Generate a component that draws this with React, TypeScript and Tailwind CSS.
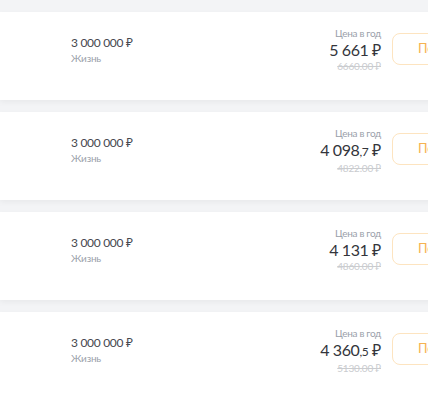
const offers = [
  { whole: '5 661', fraction: '', old: '6660.00 ₽' },
  { whole: '4 098', fraction: ',7', old: '4822.00 ₽' },
  { whole: '4 131', fraction: '', old: '4860.00 ₽' },
  { whole: '4 360', fraction: ',5', old: '5130.00 ₽' },
];

function OfferCard({ whole, fraction, old }: { whole: string; fraction: string; old: string }) {
  return (
    <div className="flex h-[88px] w-[530px] shrink-0 items-start bg-white shadow-[0_2px_6px_rgba(0,0,0,0.05)]">
      <div className="w-[71px] shrink-0" />
      <div className="flex-1 pt-[23px]">
        <div className="text-[12px] leading-4 tracking-[-0.3px] text-[#46484f]">3 000 000 ₽</div>
        <div className="text-[10px] leading-[14px] tracking-[-0.2px] text-[#9aa0aa]">Жизнь</div>
      </div>
      <div className="flex flex-col items-end pt-[14px]">
        <div className="text-[10px] leading-[14px] tracking-[-0.3px] text-[#9aa0aa]">Цена в год</div>
        <div className="text-[16px] leading-5 tracking-[-0.4px] text-[#33353b]">
          {whole}
          {fraction && <span className="text-[12px]">{fraction}</span>} ₽
        </div>
        <div className="text-[10px] leading-3 tracking-[-0.2px] text-[#cacccf] line-through">{old}</div>
      </div>
      <div className="ml-[11px] mt-[21px] flex h-8 w-[138px] shrink-0 items-center rounded-lg border border-[#fde4c0] pl-[25px] text-[13px] text-[#f6b352]">
        Подробнее
      </div>
    </div>
  );
}

export default function App() {
  return (
    <div
      className="flex h-[400px] w-[428px] flex-col gap-3 overflow-hidden bg-[#f3f4f6] pt-3"
      style={{ fontFamily: 'Lato, "Noto Sans", sans-serif' }}
    >
      {offers.map((o, i) => (
        <OfferCard key={i} {...o} />
      ))}
    </div>
  );
}
